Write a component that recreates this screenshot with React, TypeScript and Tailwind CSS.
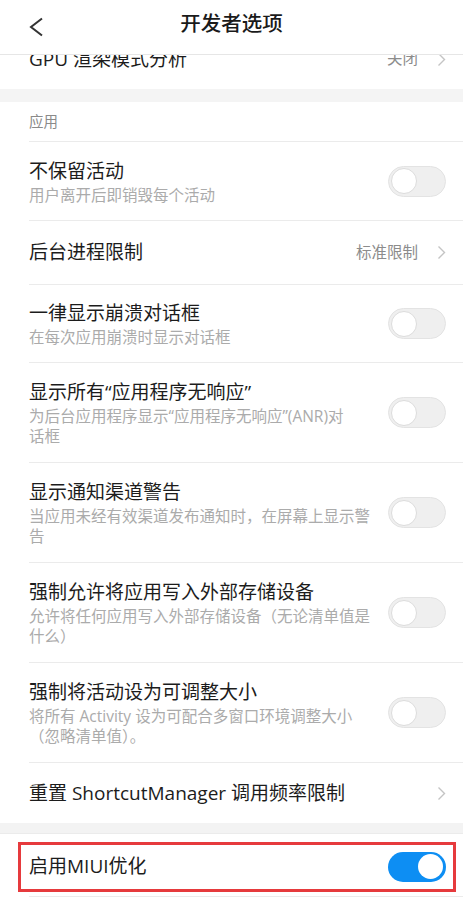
import React from "react";

type Row =
  | { kind: "toggle"; title: string; sub: string[]; h: string }
  | { kind: "link"; title: string; value?: string; h: string };

const ROWS: Row[] = [
  { kind: "toggle", title: "不保留活动", sub: ["用户离开后即销毁每个活动"], h: "h-[79px]" },
  { kind: "link", title: "后台进程限制", value: "标准限制", h: "h-[64px]" },
  { kind: "toggle", title: "一律显示崩溃对话框", sub: ["在每次应用崩溃时显示对话框"], h: "h-[78px]" },
  {
    kind: "toggle",
    title: "显示所有“应用程序无响应”",
    sub: ["为后台应用程序显示“应用程序无响应”(ANR)对", "话框"],
    h: "h-[100px]",
  },
  {
    kind: "toggle",
    title: "显示通知渠道警告",
    sub: ["当应用未经有效渠道发布通知时，在屏幕上显示警", "告"],
    h: "h-[100px]",
  },
  {
    kind: "toggle",
    title: "强制允许将应用写入外部存储设备",
    sub: ["允许将任何应用写入外部存储设备（无论清单值是", "什么）"],
    h: "h-[100px]",
  },
  {
    kind: "toggle",
    title: "强制将活动设为可调整大小",
    sub: ["将所有 Activity 设为可配合多窗口环境调整大小", "（忽略清单值）。"],
    h: "h-[100px]",
  },
  { kind: "link", title: "重置 ShortcutManager 调用频率限制", h: "h-[61px]" },
];

function Chevron() {
  return (
    <svg width="9" height="15" viewBox="0 0 9 15" className="shrink-0">
      <polyline points="1.5,1.5 7.5,7.5 1.5,13.5" fill="none" stroke="#c4c4c4" strokeWidth="1.4" />
    </svg>
  );
}

function Toggle({ on }: { on?: boolean }) {
  if (on) {
    return (
      <div className="w-[58px] h-[30px] rounded-full bg-[#0d8ef3] flex items-center justify-end pr-[3px] shrink-0">
        <div className="w-[25px] h-[25px] rounded-full bg-white" />
      </div>
    );
  }
  return (
    <div className="w-[58px] h-[31px] rounded-full bg-[#efefef] border border-[#e3e3e3] flex items-center pl-[2px] shrink-0">
      <div className="w-[26px] h-[26px] rounded-full bg-white border border-[#dcdcdc]" />
    </div>
  );
}

function SettingRow({ row }: { row: Row }) {
  return (
    <div className="pl-[29px]">
      <div className={`${row.h} border-t border-[#ebebeb] flex items-center pr-[17px]`}>
        <div className="flex-1 min-w-0">
          <div className="text-[19px] leading-[27px] text-[#1c1c1c] whitespace-nowrap">{row.title}</div>
          {row.kind === "toggle" &&
            row.sub.map((line) => (
              <div key={line} className="text-[15.5px] leading-[20px] text-[#ababab] whitespace-nowrap">
                {line}
              </div>
            ))}
        </div>
        {row.kind === "toggle" ? (
          <Toggle />
        ) : (
          <div className="flex items-center gap-[19px]">
            {row.value && <span className="text-[15.5px] text-[#8c8c8c]">{row.value}</span>}
            <Chevron />
          </div>
        )}
      </div>
    </div>
  );
}

export default function App() {
  return (
    <div className="w-full h-[904px] bg-white overflow-hidden font-['Open_Sans','Noto_Sans_CJK_SC',sans-serif]">
      {/* header */}
      <div className="h-[55px] border-b border-[#e6e6e6] grid grid-cols-[1fr_auto_1fr] items-center">
        <div className="pl-[29px] flex items-center">
          <svg width="15" height="20" viewBox="0 0 15 20">
            <polyline points="13,1.5 2,10 13,18.5" fill="none" stroke="#333" strokeWidth="2" />
          </svg>
        </div>
        <div className="text-[20.5px] font-medium text-[#1a1a1a] -mt-[8px]">开发者选项</div>
        <div />
      </div>

      {/* partially scrolled row */}
      <div className="h-[34px] overflow-hidden">
        <div className="h-[70px] -mt-[31px] pl-[29px] pr-[17px] flex items-center">
          <div className="flex-1 text-[19px] text-[#1c1c1c]">GPU 渲染模式分析</div>
          <div className="flex items-center gap-[19px]">
            <span className="text-[15.5px] text-[#8c8c8c]">关闭</span>
            <Chevron />
          </div>
        </div>
      </div>

      <div className="h-[13px] bg-[#f4f4f4]" />

      <div className="h-[39px] pl-[29px] flex items-center text-[14.5px] text-[#8a8a8a]">应用</div>

      {ROWS.map((row) => (
        <SettingRow key={row.title} row={row} />
      ))}

      <div className="h-[11px] bg-[#f3f3f3] border-b border-[#ebebeb]" />

      <div className="relative pl-[29px]">
        <div className="h-[63px] border-b border-[#ebebeb] flex items-center pr-[17px] pt-[3px]">
          <div className="flex-1 text-[19px] text-[#1c1c1c]">启用MIUI优化</div>
          <Toggle on />
        </div>
        <div className="absolute top-[8px] left-[18px] right-[7px] h-[50px] border-[3px] border-[#e63a3d]" />
      </div>
    </div>
  );
}
